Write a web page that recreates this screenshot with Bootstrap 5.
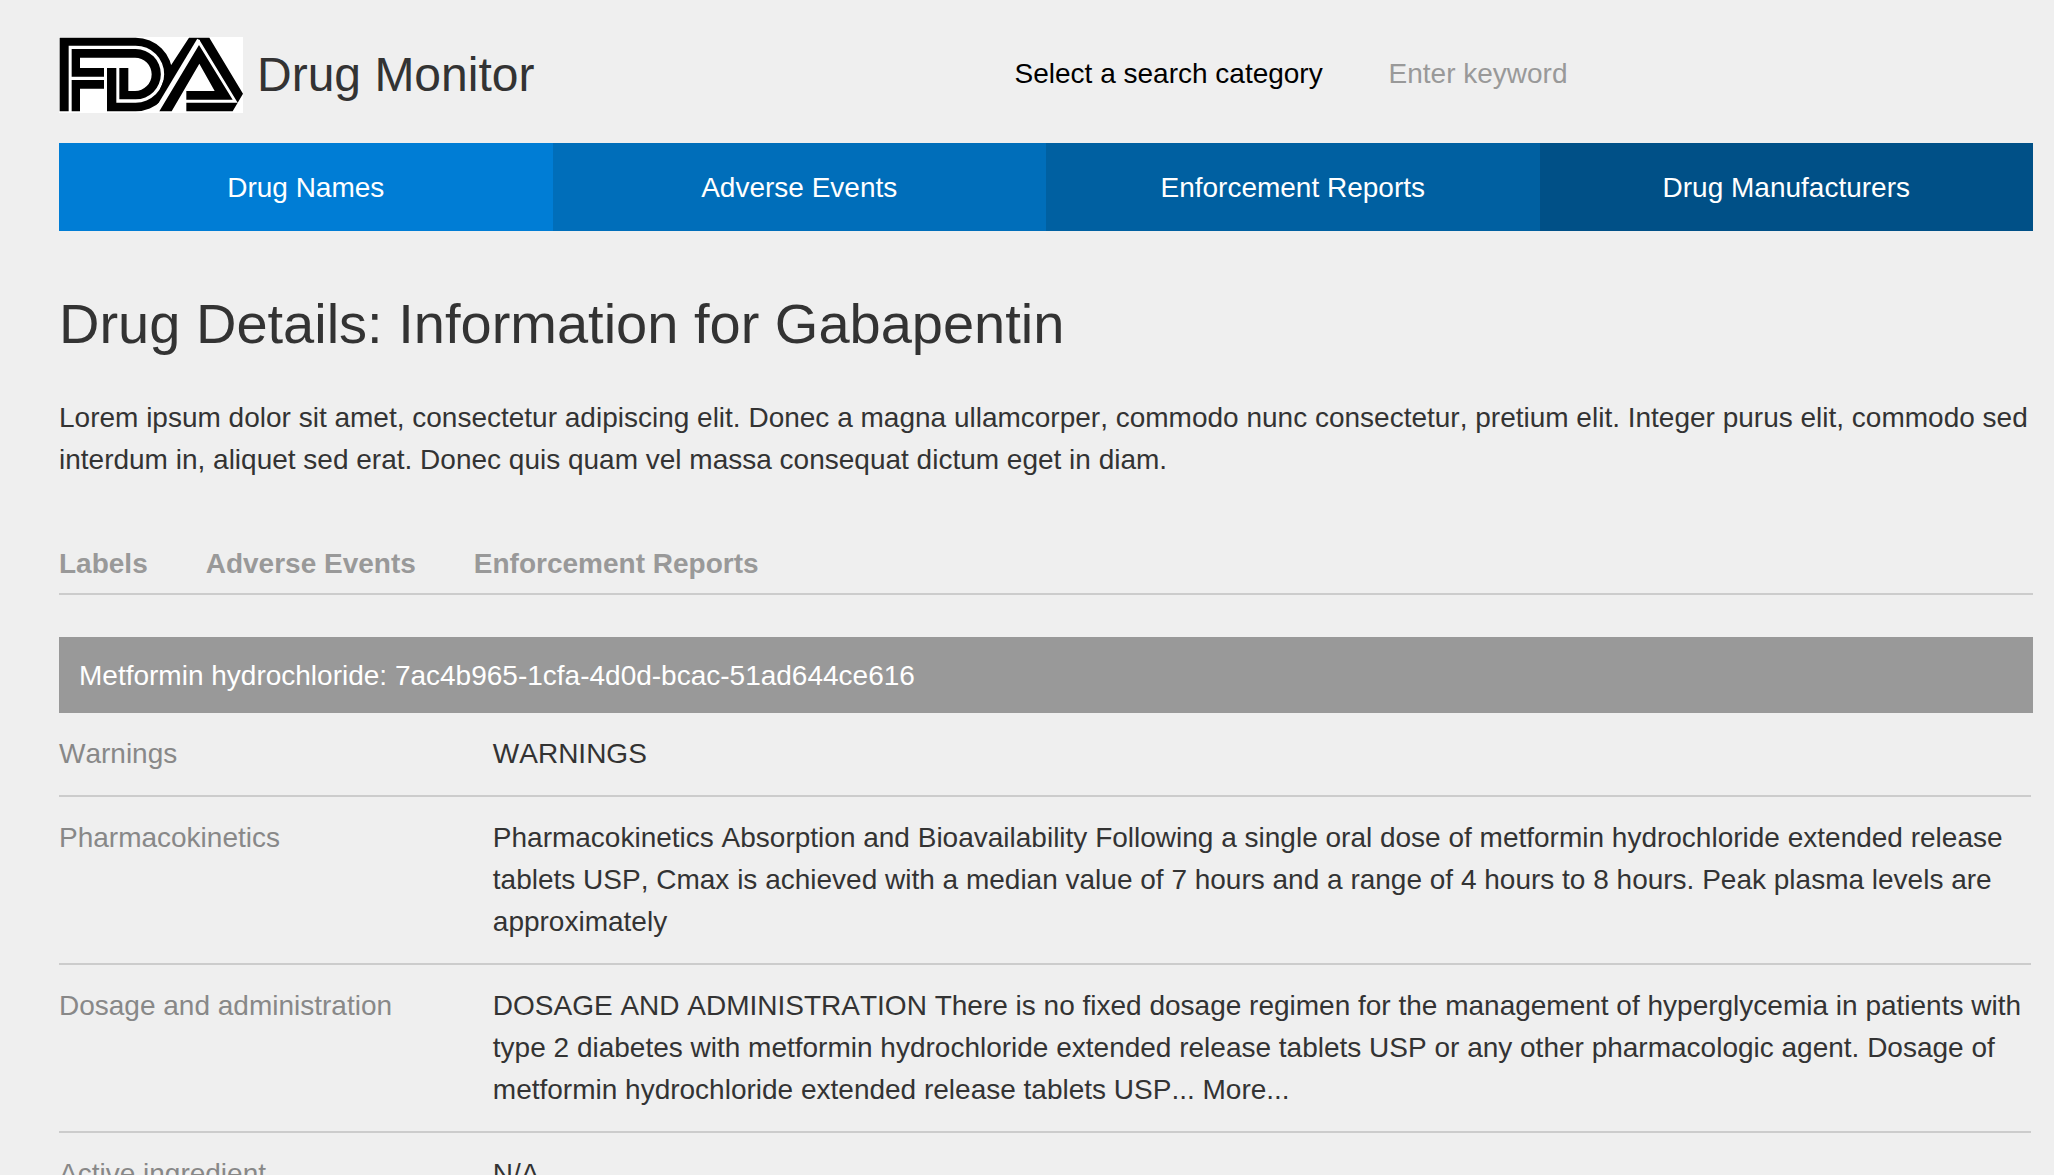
<!DOCTYPE html>
<html lang="en">
<head>
<meta charset="utf-8">
<meta name="viewport" content="width=device-width, initial-scale=1">
<title>Drug Monitor</title>
<link href="https://cdn.jsdelivr.net/npm/bootstrap@5.3.0/dist/css/bootstrap.min.css" rel="stylesheet">
<style>
body{font-family:"Liberation Sans",Arial,sans-serif;font-size:28px;line-height:42px;font-kerning:none;color:#333;background:#efefef;overflow-x:hidden}
.page{padding:37px 21px 0 59px}
.brand{gap:14px;color:#333}
.brand-logo{width:184px;height:76px;flex:none}
.brand-name{font-size:48px;line-height:76px}
.search-form{gap:65px;padding:0 0 2px 8px}
@media (min-width:992px){.search-form{width:52%}}
.search-field{font-size:28px;line-height:42px;background:transparent;border:0;padding:0;color:#000;appearance:none}
.search-field::placeholder{color:#999;opacity:1}
.main-nav{margin-top:30px}
.main-nav a{padding:24px 0 22px;color:#fff}
.nav-a{background:#007dd5}
.nav-b{background:#006eba}
.nav-c{background:#0060a1}
.nav-d{background:#005087}
h1{font-size:56px;line-height:84px;margin:51px 0 31px;font-weight:400}
.tab-row{margin-top:62px;gap:58px;border-bottom:2px solid #ccc;padding-bottom:8px}
.tab-row a{color:#999}
.label-head{margin:42px 0 0;padding:18px 20px 16px;background:#999;color:#fff;font-size:28px;line-height:42px;font-weight:400}
.detail-list{margin:0 2px 0 0}
.detail-row{padding:20px 0;border-bottom:2px solid #ccc}
.detail-row dt{font-weight:400;color:#888;width:22%}
.detail-row dd{margin:0;width:78%}
</style>
</head>
<body>
<div class="page">
  <header class="row g-0 align-items-center">
    <a class="brand col-12 col-lg d-flex align-items-center text-decoration-none" href="#">
      <svg class="brand-logo" viewBox="0 0 552 228" role="img" aria-label="FDA">
        <rect width="552" height="228" fill="#fff"/>
        <!-- outer band of the F running into the D -->
        <path d="M2 223V2H230A110.500 110.500 0 0 1 230 223H144V93H172V197H230A85.500 85.500 0 0 0 230 26H29V223Z"/>
        <!-- inner F and inner D -->
        <path d="M38 119V36H230A75.500 75.500 0 0 1 230 187H181V93H208V162H228A50 50 0 0 0 228 62H63V93H135V119Z"/>
        <path d="M38 129H135V155H63V223H38Z"/>
        <!-- A -->
        <path d="M390 2H451L552 170L521 223H382V197H536L420 7L303 202L290 190L314 130L336 85Z"/>
        <path d="M419 8L283 234" stroke="#fff" stroke-width="10" fill="none"/>
        <path d="M420 24L301 223H338L421 80L467 162H382V188H521Z"/>
      </svg>
      <span class="brand-name">Drug Monitor</span>
    </a>
    <form class="search-form col-12 col-lg-auto d-flex flex-wrap" onsubmit="return false">
      <select class="search-field" aria-label="Search category">
        <option>Select a search category</option>
        <option>Drug Names</option>
        <option>Adverse Events</option>
      </select>
      <input class="search-field" type="text" placeholder="Enter keyword" aria-label="Enter keyword">
    </form>
  </header>
  <nav class="main-nav row g-0 text-center" aria-label="Main">
    <a class="col-12 col-sm-6 col-lg-3 text-decoration-none nav-a" href="#">Drug Names</a>
    <a class="col-12 col-sm-6 col-lg-3 text-decoration-none nav-b" href="#">Adverse Events</a>
    <a class="col-12 col-sm-6 col-lg-3 text-decoration-none nav-c" href="#">Enforcement Reports</a>
    <a class="col-12 col-sm-6 col-lg-3 text-decoration-none nav-d" href="#">Drug Manufacturers</a>
  </nav>
  <main>
    <h1>Drug Details: Information for Gabapentin</h1>
    <p class="mb-0">Lorem ipsum dolor sit amet, consectetur adipiscing elit. Donec a magna ullamcorper, commodo nunc consectetur, pretium elit. Integer purus elit, commodo sed interdum in, aliquet sed erat. Donec quis quam vel massa consequat dictum eget in diam.</p>
    <nav class="tab-row d-flex flex-wrap fw-bold" aria-label="Drug details">
      <a class="text-decoration-none" href="#">Labels</a>
      <a class="text-decoration-none" href="#">Adverse Events</a>
      <a class="text-decoration-none" href="#">Enforcement Reports</a>
    </nav>
    <h2 class="label-head">Metformin hydrochloride: 7ac4b965-1cfa-4d0d-bcac-51ad644ce616</h2>
    <dl class="detail-list">
      <div class="detail-row d-flex">
        <dt>Warnings</dt>
        <dd>WARNINGS</dd>
      </div>
      <div class="detail-row d-flex">
        <dt>Pharmacokinetics</dt>
        <dd>Pharmacokinetics Absorption and Bioavailability Following a single oral dose of metformin hydrochloride extended release tablets USP, Cmax is achieved with a median value of 7 hours and a range of 4 hours to 8 hours. Peak plasma levels are approximately</dd>
      </div>
      <div class="detail-row d-flex">
        <dt>Dosage and administration</dt>
        <dd>DOSAGE AND ADMINISTRATION There is no fixed dosage regimen for the management of hyperglycemia in patients with type 2 diabetes with metformin hydrochloride extended release tablets USP or any other pharmacologic agent. Dosage of metformin hydrochloride extended release tablets USP... More...</dd>
      </div>
      <div class="detail-row d-flex">
        <dt>Active ingredient</dt>
        <dd>N/A</dd>
      </div>
    </dl>
  </main>
</div>
<script src="https://cdn.jsdelivr.net/npm/bootstrap@5.3.0/dist/js/bootstrap.bundle.min.js"></script>
</body>
</html>
